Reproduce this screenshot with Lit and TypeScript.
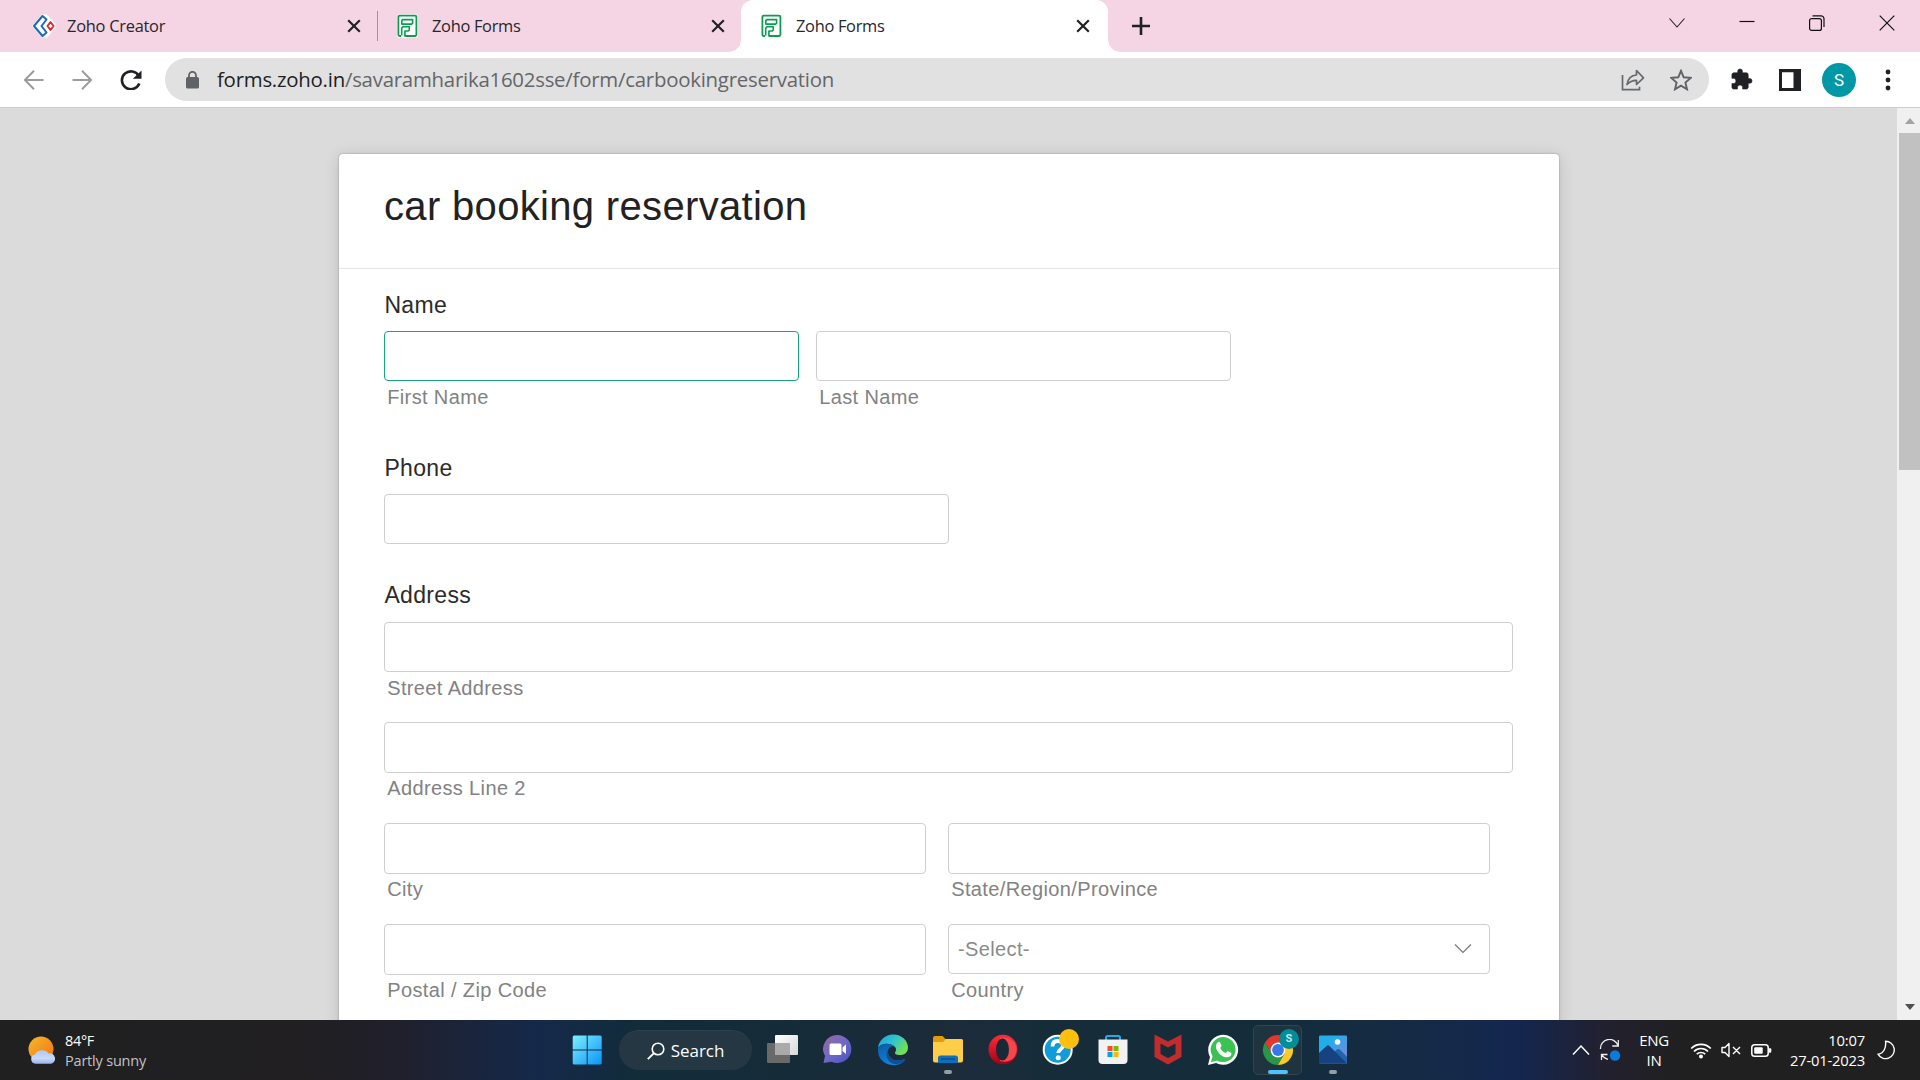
import { LitElement, html, css, svg } from "lit";
import { customElement, property } from "lit/decorators.js";

interface Field {
  sub: string;
  kind?: string;
}

const formsLogo = html`<svg class="fav" width="21" height="24" viewBox="0 0 21 24">
  <rect x="0" y="0" width="21" height="24" rx="3" fill="#fff" />
  <path d="M4 22H2.800a1.400 1.400 0 0 1-1.400-1.400V3A1.400 1.400 0 0 1 2.800 1.600h15.200A1.400 1.400 0 0 1 19.400 3v17.600a1.400 1.400 0 0 1-1.400 1.400H7.500" fill="none" stroke="#0a9c50" stroke-width="1.800" />
  <path d="M5.800 5.600h9.800v3.600l-1 .9H4.800V6.600zM4.700 21.500v-7.300l1.200-1.400h6.400v3.200l-1 1H7.900V22" fill="none" stroke="#0a9c50" stroke-width="1.600" stroke-linejoin="round" />
</svg>`;

const creatorLogo = html`<svg class="fav" width="24" height="24" viewBox="0 0 24 24">
  <path d="M0 12 10 .5h5l8.500 9.500v4L15 23.500h-5z" fill="#fff" />
  <path d="M10.500 2 2 12l8.500 10 4-3.500L9.500 12l5-6.500z" fill="none" stroke="#1a6bb8" stroke-width="2" stroke-linejoin="round" />
  <path d="M18.500 8 15.500 12l3 4 3-4z" fill="none" stroke="#e02a2f" stroke-width="2" stroke-linejoin="round" />
</svg>`;

const closeIcon = html`<svg width="14" height="14" viewBox="0 0 14 14"><path d="M1.200 1.200l11.600 11.600M12.800 1.200 1.200 12.800" stroke="#202124" stroke-width="2.200" /></svg>`;

@customElement("browser-tabs")
export class BrowserTabs extends LitElement {
  static styles = css`
    :host { display: block; height: 52px; background: #f5d5e3; font-family: "Open Sans", "Noto Sans", sans-serif; }
    .strip { display: flex; height: 52px; align-items: center; }
    .tab { display: flex; align-items: center; box-sizing: border-box; height: 52px; font-size: 16.4px; color: #26272b; }
    .tab.one { width: 377px; padding: 0 16px 0 32px; }
    .tab.two { width: 363px; padding: 0 16px 0 19px; }
    .tab.active { width: 367px; padding: 0 18px 0 20px; background: #fff; border-radius: 12px 12px 0 0; position: relative; }
    .tab.active::before, .tab.active::after { content: ""; position: absolute; bottom: 0; width: 12px; height: 12px; }
    .tab.active::before { left: -12px; background: radial-gradient(circle at 0 0, transparent 11.500px, #fff 12px); }
    .tab.active::after { right: -12px; background: radial-gradient(circle at 100% 0, transparent 11.500px, #fff 12px); }
    .fav { flex: none; }
    .name { flex: 1; white-space: nowrap; letter-spacing: -0.3px; padding-bottom: 2px; }
    .one .name { margin-left: 11px; letter-spacing: -0.25px; }
    .two .name, .active .name { margin-left: 14px; }
    .bar { width: 1px; height: 30px; background: #a2909a; flex: none; }
    .plus { margin-left: 24px; }
    .wins { margin-left: auto; display: flex; padding: 0 25px 7px 0; gap: 54px; align-items: center; }
  `;
  render() {
    return html`<div class="strip">
      <div class="tab one">${creatorLogo}<span class="name">Zoho Creator</span>${closeIcon}</div>
      <div class="bar"></div>
      <div class="tab two">${formsLogo}<span class="name">Zoho Forms</span>${closeIcon}</div>
      <div class="tab active">${formsLogo}<span class="name">Zoho Forms</span>${closeIcon}</div>
      <svg class="plus" width="18" height="18" viewBox="0 0 18 18"><path d="M9 0v18M0 9h18" stroke="#202124" stroke-width="2.600" /></svg>
      <div class="wins">
        <svg width="16" height="16" viewBox="0 0 16 16"><path d="M.5 3.500 8 12l7.500-8.500" fill="none" stroke="#222" stroke-width="1.100" /></svg>
        <svg width="16" height="16" viewBox="0 0 16 16"><path d="M.5 6.500h15" stroke="#111" stroke-width="1.200" /></svg>
        <svg width="16" height="16" viewBox="0 0 16 16"><rect x=".6" y="3.600" width="11.800" height="11.800" rx="2" fill="none" stroke="#111" stroke-width="1.200" /><path d="M3.500 .8h8.500a3 3 0 0 1 3 3V12" fill="none" stroke="#111" stroke-width="1.200" /></svg>
        <svg width="16" height="16" viewBox="0 0 16 16"><path d="M.7.700l14.600 14.600M15.300.700.700 15.300" stroke="#111" stroke-width="1.200" /></svg>
      </div>
    </div>`;
  }
}

@customElement("browser-toolbar")
export class BrowserToolbar extends LitElement {
  static styles = css`
    :host { display: block; font-family: "Open Sans", "Noto Sans", sans-serif; }
    .bar { display: flex; align-items: center; height: 56px; box-sizing: border-box; background: #fff; border-bottom: 1px solid #cdcdcd; padding: 0 0 0 24px; }
    .nav { display: flex; gap: 28px; width: 141px; }
    .nav svg { flex: none; }
    .omni { display: flex; align-items: center; box-sizing: border-box; width: 1544px; height: 43px; border-radius: 22px; background: #e1e1e1; padding: 0 17px 0 20px; flex: none; }
    .url { margin-left: 17px; font-size: 20.4px; letter-spacing: -0.24px; color: #646669; white-space: nowrap; flex: 1; padding-bottom: 1px; }
    .host { color: #202124; }
    .star { margin-left: 25px; }
    .ext { display: flex; align-items: center; padding-left: 21px; }
    .panel { margin-left: 26px; }
    .avatar { width: 34px; height: 34px; border-radius: 50%; background: #0097a7; color: #fff; font: 17px/34px Roboto, sans-serif; text-align: center; margin: 0 29px 0 21px; }
  `;
  render() {
    return html`<div class="bar">
      <div class="nav">
        <svg width="20" height="20" viewBox="0 0 20 20"><path d="M19.500 10H1.500M10 .8.900 10l9.100 9.200" fill="none" stroke="#9b9c9e" stroke-width="2" /></svg>
        <svg width="20" height="20" viewBox="0 0 20 20"><path d="M.5 10h18M10 .8l9.100 9.200-9.100 9.200" fill="none" stroke="#9b9c9e" stroke-width="2" /></svg>
        <svg width="22" height="20" viewBox="0 0 22 20"><path d="M18.900 6.200A9 8.900 0 1 0 19.300 13.500" fill="none" stroke="#202124" stroke-width="2.600" /><path d="M21.500.5v8.300h-8.600z" fill="#202124" /></svg>
      </div>
      <div class="omni">
        <svg width="15" height="18" viewBox="0 0 15 18"><rect x="1" y="6" width="13" height="11.500" rx="1.600" fill="#5f6368" /><path d="M4 6.500V4.300a3.500 3.500 0 0 1 7 0v2.200" fill="none" stroke="#5f6368" stroke-width="1.800" /></svg>
        <div class="url"><span class="host">forms.zoho.in</span>/savaramharika1602sse/form/carbookingreservation</div>
        <svg width="24" height="22" viewBox="0 0 24 22"><path d="M1.500 6v14.700h17v-3" fill="none" stroke="#66696d" stroke-width="1.700" /><path d="M6 15.500C7 9 10.500 6.300 15.500 6V1.500l7 7.300-7 6.700V11.300C11 11.300 8.500 12.500 6 15.500z" fill="none" stroke="#66696d" stroke-width="1.700" stroke-linejoin="round" /></svg>
        <svg class="star" width="22" height="22" viewBox="0 0 22 22"><path d="M11 1.800l2.700 6.500 7 .6-5.300 4.600 1.600 6.800-6-3.600-6 3.600 1.600-6.800L1.300 8.900l7-.6z" fill="none" stroke="#5f6368" stroke-width="1.900" /></svg>
      </div>
      <div class="ext">
        <svg width="23" height="23" viewBox="0 0 24 24"><path d="M20.500 11H19V7c0-1.100-.9-2-2-2h-4V3.500a2.500 2.500 0 0 0-5 0V5H4c-1.100 0-2 .9-2 2v3.800h1.500c1.500 0 2.700 1.200 2.700 2.700S5 16.200 3.500 16.200H2V20c0 1.100.9 2 2 2h3.800v-1.500c0-1.500 1.200-2.700 2.700-2.700s2.700 1.200 2.700 2.700V22H17c1.100 0 2-.9 2-2v-4h1.500a2.500 2.500 0 0 0 0-5z" fill="#202124" stroke="#202124" stroke-width=".6" /></svg>
        <svg class="panel" width="22" height="22" viewBox="0 0 22 22"><path fill-rule="evenodd" d="M0 0h22v22H0zM3 3.200v15.800h11.500V3.200z" fill="#202124" /></svg>
        <div class="avatar">S</div>
        <svg width="6" height="22" viewBox="0 0 6 22"><circle cx="3" cy="3" r="2.400" fill="#202124" /><circle cx="3" cy="11" r="2.400" fill="#202124" /><circle cx="3" cy="19" r="2.400" fill="#202124" /></svg>
      </div>
    </div>`;
  }
}

@customElement("form-field")
export class FormField extends LitElement {
  @property() sub = "";
  @property() kind = "";
  static styles = css`
    :host { display: block; font-family: "Liberation Sans", Arial, sans-serif; }
    .box { box-sizing: border-box; height: 50px; border: 1px solid #cfcfcf; border-radius: 4px; background: #fff; margin-bottom: 4px; }
    .tall { height: 51px; margin-bottom: 3px; }
    .focus { border-color: #1ba286; }
    .select { display: flex; align-items: center; justify-content: space-between; padding: 0 17px 0 9px; color: #8a8a8a; font-size: 20px; letter-spacing: 0.375px; }
    .sub { margin-left: 3.200px; font-size: 20px; line-height: 24px; letter-spacing: 0.375px; color: #828282; white-space: nowrap; }
  `;
  render() {
    return html`<div class="box ${this.kind}">
        ${this.kind === "select"
          ? html`<span>-Select-</span><svg width="18" height="12" viewBox="0 0 18 12"><path d="M1 1.500l8 8 8-8" fill="none" stroke="#777" stroke-width="1.200" /></svg>`
          : ""}
      </div>
      ${this.sub ? html`<div class="sub">${this.sub}</div>` : ""}`;
  }
}

@customElement("booking-form")
export class BookingForm extends LitElement {
  static styles = css`
    :host { display: block; }
    .card { box-sizing: border-box; width: 1220px; height: 1100px; background: #fff; border-radius: 4px 4px 0 0; box-shadow: 0 0 2px rgba(70, 80, 90, 0.5), 0 2px 16px rgba(0, 0, 0, 0.14); font-family: "Liberation Sans", Arial, sans-serif; }
    .head { box-sizing: border-box; height: 115px; border-bottom: 1px solid #e6e6e6; padding: 27px 45px 0; }
    .title { margin: 0; font-size: 40px; line-height: 50px; font-weight: 400; letter-spacing: 0.33px; color: #222; }
    .body { padding: 21px 45px 0; }
    .group { display: flex; flex-direction: column; }
    .label { font-size: 23px; line-height: 30px; letter-spacing: 0.34px; color: #2b2b2b; padding-left: 0.4px; margin-bottom: 11px; }
    .address .label { line-height: 28px; margin-bottom: 13px; }
    .name { height: 163px; }
    .phone { height: 128px; }
    .pair { display: grid; }
    .name .pair { grid-template-columns: 415px 415px; column-gap: 17px; }
    .phone form-field { width: 565px; }
    .line { height: 101px; width: 1129px; }
    .line.first { height: 100px; }
    .address .pair { grid-template-columns: 542px 542px; column-gap: 22px; }
  `;
  private cells(list: Field[]) {
    return list.map((f) => html`<form-field .sub=${f.sub} .kind=${f.kind ?? ""}></form-field>`);
  }
  render() {
    return html`<div class="card">
      <div class="head"><h1 class="title">car booking reservation</h1></div>
      <div class="body">
        <div class="group name">
          <div class="label">Name</div>
          <div class="pair">${this.cells([{ sub: "First Name", kind: "focus" }, { sub: "Last Name" }])}</div>
        </div>
        <div class="group phone"><div class="label">Phone</div>${this.cells([{ sub: "" }])}</div>
        <div class="group address">
          <div class="label">Address</div>
          <div class="line first">${this.cells([{ sub: "Street Address" }])}</div>
          <div class="line">${this.cells([{ sub: "Address Line 2", kind: "tall" }])}</div>
          <div class="line pair">${this.cells([{ sub: "City", kind: "tall" }, { sub: "State/Region/Province", kind: "tall" }])}</div>
          <div class="line pair">${this.cells([{ sub: "Postal / Zip Code", kind: "tall" }, { sub: "Country", kind: "select" }])}</div>
        </div>
      </div>
    </div>`;
  }
}

const icons = {
  start: svg`<defs><linearGradient id="w" gradientUnits="userSpaceOnUse" x1="1" y1="1" x2="30" y2="30"><stop offset="0" stop-color="#7cf0fb" /><stop offset="1" stop-color="#0a93fb" /></linearGradient></defs><path transform="translate(.7 .5)" d="M1 2.500Q1 1 2.500 1H15V15H1zM16 1h12.500Q30 1 30 2.500V15H16zM1 16h14V30H2.500Q1 30 1 28.500zM16 16H30v12.500q0 1.500-1.500 1.500H16z" fill="url(#w)" />`,
  task: svg`<defs><linearGradient id="t" x1="0" y1="0" x2="1" y2="1"><stop offset="0" stop-color="#fff" /><stop offset="1" stop-color="#d8d8d8" /></linearGradient></defs><rect x="0" y="9" width="23" height="20" rx="1" fill="#696969" /><rect x="8" y="1" width="23" height="20" rx="1" fill="url(#t)" /><path d="M8 9h15v12H8z" fill="#aaa" />`,
  chat: svg`<defs><linearGradient id="c" x1="0" y1="0" x2="1" y2="1"><stop offset="0" stop-color="#9a6a9c" /><stop offset=".5" stop-color="#6f68c8" /><stop offset="1" stop-color="#4a50c4" /></linearGradient></defs><path d="M16 1A14.200 14 0 1 1 9.500 27.800L1.500 29 3 22A14.200 14 0 0 1 16 1z" fill="url(#c)" /><rect x="7.500" y="9.500" width="12" height="11.500" rx="1.500" fill="#fff" /><path d="M20.500 13.500 24 10.300v9.800l-3.500-3z" fill="#fff" />`,
  edge: svg`<defs><linearGradient id="e1" x1="0" y1="0" x2="1" y2=".5"><stop offset="0" stop-color="#1aa3dd" /><stop offset=".55" stop-color="#32c4d0" /><stop offset="1" stop-color="#72e052" /></linearGradient><linearGradient id="e2" x1="0" y1="0" x2=".5" y2="1"><stop offset="0" stop-color="#0c59a4" /><stop offset="1" stop-color="#0f86dc" /></linearGradient></defs><path d="M1 14C2 6 8.500 .5 16 .5 25 .5 31 7 31 13.500c0 5-3.500 7.500-8 7.500-4 0-5.500-1.500-5-2.500 1.500-2 1.500-4.500-.5-6C13 8.500 4 9 1 14z" fill="url(#e1)" /><path d="M1 14c3-5 12-5.500 16.500-1.500-4-1-7 2-6.500 6 .5 6 7 9.500 14.500 7.300 2-.6 3 0 2 1C25 30 20 31.500 15 31 7 30.500 0 24 1 14z" fill="url(#e2)" /><path d="M17.500 12.500c-4-1-7 2-6.500 6 .5 6 7 9.500 14.500 7.300 2.500-.8 3.500-.3 2 1-4 4-10.500 4.200-14 1.400C7 23 9 13 17.500 12.500z" fill="#124c94" />`,
  folder: svg`<path d="M1 4Q1 2 3 2h7.500l3 3H21v6H1z" fill="#e09c0a" /><path d="M1 8h10l3-3h15.500Q31 5 31 6.500v20q0 2-2 2H3q-2 0-2-2z" fill="#ffcd48" /><path d="M6 29v-5q0-2.500 2.500-2.500H23.500Q26 21.500 26 24v5z" fill="#0d6fbe" /><path d="M9 25h14" stroke="#064c8a" stroke-width="1.500" />`,
  opera: svg`<defs><linearGradient id="o" x1="0" y1="0" x2="0" y2="1"><stop offset="0" stop-color="#ff2b3a" /><stop offset="1" stop-color="#a70014" /></linearGradient></defs><ellipse cx="16" cy="15.500" rx="14.500" ry="14.700" fill="url(#o)" /><path d="M13 4C20 2 25 6 27.500 8a14.500 14.500 0 0 1 0 15C25 26 20 29 13 27z" fill="#f4474c" /><ellipse cx="15.500" cy="15.500" rx="6.500" ry="11" fill="#192a37" />`,
  help: svg`<circle cx="15.700" cy="15.700" r="15" fill="#fff" /><circle cx="15.700" cy="15.700" r="13" fill="#119bd8" /><path d="M10.500 12.500c0-4 2.300-5.500 5.200-5.500 3.300 0 5.300 2 5.300 4.500 0 4-4.800 3.500-4.800 7.500" fill="none" stroke="#fff" stroke-width="3.800" /><circle cx="16.200" cy="23.700" r="2.500" fill="#fff" /><circle cx="27" cy="5" r="10" fill="#ffbf0f" />`,
  store: svg`<path d="M9 6V3.500Q9 2 10.500 2h11Q23 2 23 3.500V6" fill="none" stroke="#23a8ea" stroke-width="2" /><path d="M1.500 5.500h29V26q0 4-4 4h-21q-4 0-4-4z" fill="#f2f2f2" /><path d="M10.500 12H15.500v5h-5z" fill="#f04e23" /><path d="M16.500 12h5v5h-5z" fill="#7fba00" /><path d="M10.500 18h5v5h-5z" fill="#00a3ee" /><path d="M16.500 18h5v5h-5z" fill="#ffb900" />`,
  mcafee: svg`<path d="M2.500 .5 16 7.500 29.500 .5V23L16 30.500 2.500 23zM8.500 9.500v10.500L16 24l7.500-4V9.500L16 13.500z" fill="#c22c2c" fill-rule="evenodd" />`,
  whats: svg`<path d="M1 31l2-8A15 15 0 1 1 9 29z" fill="#fff" /><path d="M4 28.200l1.500-6A12.500 12.500 0 1 1 10 26.500z" fill="#3cc253" /><path d="M10.500 8.500c1-1 2.300-.8 2.800.2l1.200 2.800c.3.800-1.300 1.900-1.200 2.500 1 2.500 3 4.200 5.300 5 .8 0 1.500-2 2.500-1.700l3 1.500c.8.500.3 2.500-.8 3.500-4 2.700-9.500-.3-12-4-2.600-3.300-3.300-7.300-.8-9.800z" fill="#fff" />`,
  photos: svg`<defs><linearGradient id="p" x1="0" y1="0" x2="1" y2="1"><stop offset=".3" stop-color="#22aeea" /><stop offset="1" stop-color="#8a7ed6" /></linearGradient></defs><path d="M2 2.500Q2 1.500 3 1.500H29q1 0 1 1v26q0 1-1 1H3q-1 0-1-1z" fill="url(#p)" /><path d="M15 20.500l4.500-4.800q1.500-1.500 3.500 0l7 7V29.500h-12z" fill="#2563a8" /><path d="M2 19l7.500-7q1.500-1.300 3 0L29 28.500v1H2z" fill="#16437f" /><circle cx="20.500" cy="8" r="2.800" fill="#fff" />`,
  chrome: svg`<path d="M16 1A15 15 0 0 1 29 8.500H16L9.500 19.700 3 8.500A15 15 0 0 1 16 1z" fill="#e2382c" /><path d="M3 8.500 9.500 19.700 16 23.500 22.500 19.700 16 31A15 15 0 0 1 3 8.500z" fill="#29974a" /><path d="M29 8.500H16l6.500 11.200L16 31A15 15 0 0 0 29 8.500z" fill="#fdc929" /><circle cx="16" cy="16" r="7.400" fill="#fff" /><circle cx="16" cy="16" r="5.900" fill="#3478ea" />`,
};

@customElement("task-bar")
export class TaskBar extends LitElement {
  static styles = css`
    :host { display: block; color: #fff; font-family: "Open Sans", "Noto Sans", sans-serif; }
    .bar { display: flex; height: 60px; background: linear-gradient(90deg, #202020 0, #211f22 16%, #20202d 21%, #14294a 28%, #122c3a 33%, #172b38 43%, #1d2b3b 50%, #172c39 54%, #132d3b 66%, #152b44 73%, #14264f 79%, #22202c 84%, #202020 88%); }
    .weather { display: flex; align-items: center; box-sizing: border-box; width: 544px; padding-left: 28px; flex: none; }
    .wtext { margin-left: 9px; font-size: 14.500px; line-height: 20px; padding-top: 1px; }
    .temp { letter-spacing: -0.35px; }
    .cond { color: #c3c3c3; letter-spacing: -0.2px; }
    .apps { display: flex; align-items: center; width: 820px; padding-left: 15px; box-sizing: border-box; flex: none; }
    .app { display: flex; position: relative; justify-content: center; align-items: center; width: 55px; height: 60px; flex: none; }
    .app:first-child { width: 56px; }
    .search { display: flex; align-items: center; justify-content: center; gap: 6px; box-sizing: border-box; width: 133px; height: 40px; border-radius: 20px; background: #243743; border-top: 1px solid #2e424d; margin: 0 3px 0 4px; font-size: 17px; letter-spacing: -0.05px; flex: none; }
    .on::before { content: ""; position: absolute; inset: 5px 3px 5px 3px; border: 1px solid #33444f; border-radius: 5px; background: #20343f; }
    .app svg { position: relative; overflow: visible; }
    .run::after { content: ""; position: absolute; bottom: 6px; width: 8px; height: 4px; border-radius: 2px; background: #959da5; }
    .on::after { content: ""; position: absolute; bottom: 6px; width: 20px; height: 4px; border-radius: 2px; background: #4cc2ff; }
    .badge { position: absolute; left: 29px; top: 9px; width: 20px; height: 20px; border-radius: 50%; background: #008c98; color: #c9e4e6; font: bold 11px/20px Roboto, sans-serif; text-align: center; }
    .tray { display: flex; align-items: center; flex: 1; justify-content: flex-end; padding-right: 25px; }
    .lang { width: 32px; margin: 0 20px 0 17px; text-align: center; font-size: 15px; line-height: 20px; letter-spacing: -0.3px; }
    .clock { width: 80px; text-align: right; margin: 0 1px 0 13px; font-size: 14.800px; line-height: 20px; letter-spacing: -0.22px; white-space: nowrap; }
    .vol { margin-left: 9px; }
    .bat { margin-left: 10px; }
    .sync { margin-left: 9px; }
    .moon { margin-left: 11px; }
  `;
  private app(shape: unknown, extra = "", badge = "") {
    return html`<div class="app ${extra}"><svg width="32" height="32" viewBox="0 0 32 32">${shape}</svg>${badge ? html`<span class="badge">${badge}</span>` : ""}</div>`;
  }
  render() {
    return html`<div class="bar">
      <div class="weather">
        <svg width="28" height="28" viewBox="0 0 28 28">
          <defs><linearGradient id="s" x1="0" y1="0" x2="1" y2="1"><stop offset="0" stop-color="#f5b92e" /><stop offset="1" stop-color="#f0720f" /></linearGradient><linearGradient id="k" x1="0" y1="0" x2="0" y2="1"><stop offset="0" stop-color="#adc8f7" /><stop offset=".6" stop-color="#c8daf8" /><stop offset="1" stop-color="#94b4ee" /></linearGradient></defs>
          <circle cx="13" cy="13" r="12.500" fill="url(#s)" /><path d="M7.500 27.800a4.700 4.700 0 0 1-.5-9.300 7.500 6.500 0 0 1 13.500-1 5.200 5.200 0 0 1 2.500 10.300z" fill="url(#k)" />
        </svg>
        <div class="wtext"><div class="temp">84°F</div><div class="cond">Partly sunny</div></div>
      </div>
      <div class="apps">
        ${this.app(icons.start)}
        <div class="search"><svg width="18" height="18" viewBox="0 0 18 18"><circle cx="11" cy="7" r="5.800" fill="none" stroke="#fff" stroke-width="1.600" /><path d="M6.700 11.300.8 17.200" stroke="#fff" stroke-width="1.900" /></svg>Search</div>
        ${this.app(icons.task)}${this.app(icons.chat)}${this.app(icons.edge)}${this.app(icons.folder, "run")}${this.app(icons.opera)}${this.app(icons.help)}${this.app(icons.store)}${this.app(icons.mcafee)}${this.app(icons.whats)}${this.app(icons.chrome, "on", "S")}${this.app(icons.photos, "run")}
      </div>
      <div class="tray">
        <svg width="18" height="12" viewBox="0 0 18 12"><path d="M1 10.500 9 2l8 8.500" fill="none" stroke="#fff" stroke-width="1.500" /></svg>
        <svg class="sync" width="22" height="22" viewBox="0 0 22 22"><path d="M1.500 10A9 9 0 0 1 19 6.500M19.300 1v6h-6M9 20.300A9 9 0 0 1 3 16M2.500 21v-5.500h6" fill="none" stroke="#eee" stroke-width="1.300" /><circle cx="16" cy="16.500" r="5.200" fill="#0a7bdc" /></svg>
        <div class="lang">ENG<br />IN</div>
        <svg width="22" height="18" viewBox="0 0 22 18"><g fill="none" stroke="#fff" stroke-width="1.700"><path d="M1.200 7.500a13.500 13.500 0 0 1 19.600 0M4 10.500a9.700 9.700 0 0 1 14 0M6.800 13.200a6 6 0 0 1 8.400 0" /></g><circle cx="11" cy="15.500" r="2" fill="#fff" /></svg>
        <svg class="vol" width="20" height="16" viewBox="0 0 20 16"><path d="M1 5.500h3l4-4v13l-4-4H1zM12 5l7 7M19 5l-7 7" fill="none" stroke="#fff" stroke-width="1.400" stroke-linejoin="round" /></svg>
        <svg class="bat" width="21" height="13" viewBox="0 0 21 13"><rect x=".8" y=".8" width="16.400" height="11.400" rx="2.800" fill="none" stroke="#fff" stroke-width="1.500" /><rect x="3.200" y="3.200" width="8.500" height="6.600" rx="1" fill="#fff" /><path d="M18 4.300h1.300q1 0 1 1v2.400q0 1-1 1H18z" fill="#fff" /></svg>
        <div class="clock">10:07<br />27-01-2023</div>
        <svg class="moon" width="18" height="20" viewBox="0 0 18 20"><path d="M8.500 1.200A8.700 8.700 0 1 1 1 14.200C6.500 13.500 9.500 8 8.500 1.200z" fill="none" stroke="#fff" stroke-width="1.400" stroke-linejoin="round" /></svg>
      </div>
    </div>`;
  }
}

@customElement("app-root")
export class AppRoot extends LitElement {
  static styles = css`
    :host { display: block; width: 1920px; height: 1080px; overflow: hidden; }
    .screen { display: flex; flex-direction: column; height: 1080px; }
    .page { display: flex; height: 912px; background: #dbdbdb; overflow: hidden; }
    .content { flex: 1; min-width: 0; padding: 46px 0 0 339px; overflow: hidden; }
    .scroll { box-sizing: border-box; width: 23px; height: 912px; background: #f0f0f0; display: flex; flex-direction: column; align-items: flex-end; padding: 9px 0 8px 0; }
    .up, .down { width: 0; height: 0; border: 5.500px solid transparent; margin-right: 5px; }
    .up { border-top: 0; border-bottom: 6px solid #a3a3a3; margin-top: 1px; }
    .down { border-bottom: 0; border-top: 6px solid #4f4f4f; margin-top: auto; margin-bottom: 2px; }
    .thumb { width: 21px; height: 337px; background: #c1c1c1; margin-top: 9px; }
  `;
  render() {
    return html`<div class="screen">
      <browser-tabs></browser-tabs>
      <browser-toolbar></browser-toolbar>
      <div class="page">
        <div class="content"><booking-form></booking-form></div>
        <div class="scroll"><div class="up"></div><div class="thumb"></div><div class="down"></div></div>
      </div>
      <task-bar></task-bar>
    </div>`;
  }
}
